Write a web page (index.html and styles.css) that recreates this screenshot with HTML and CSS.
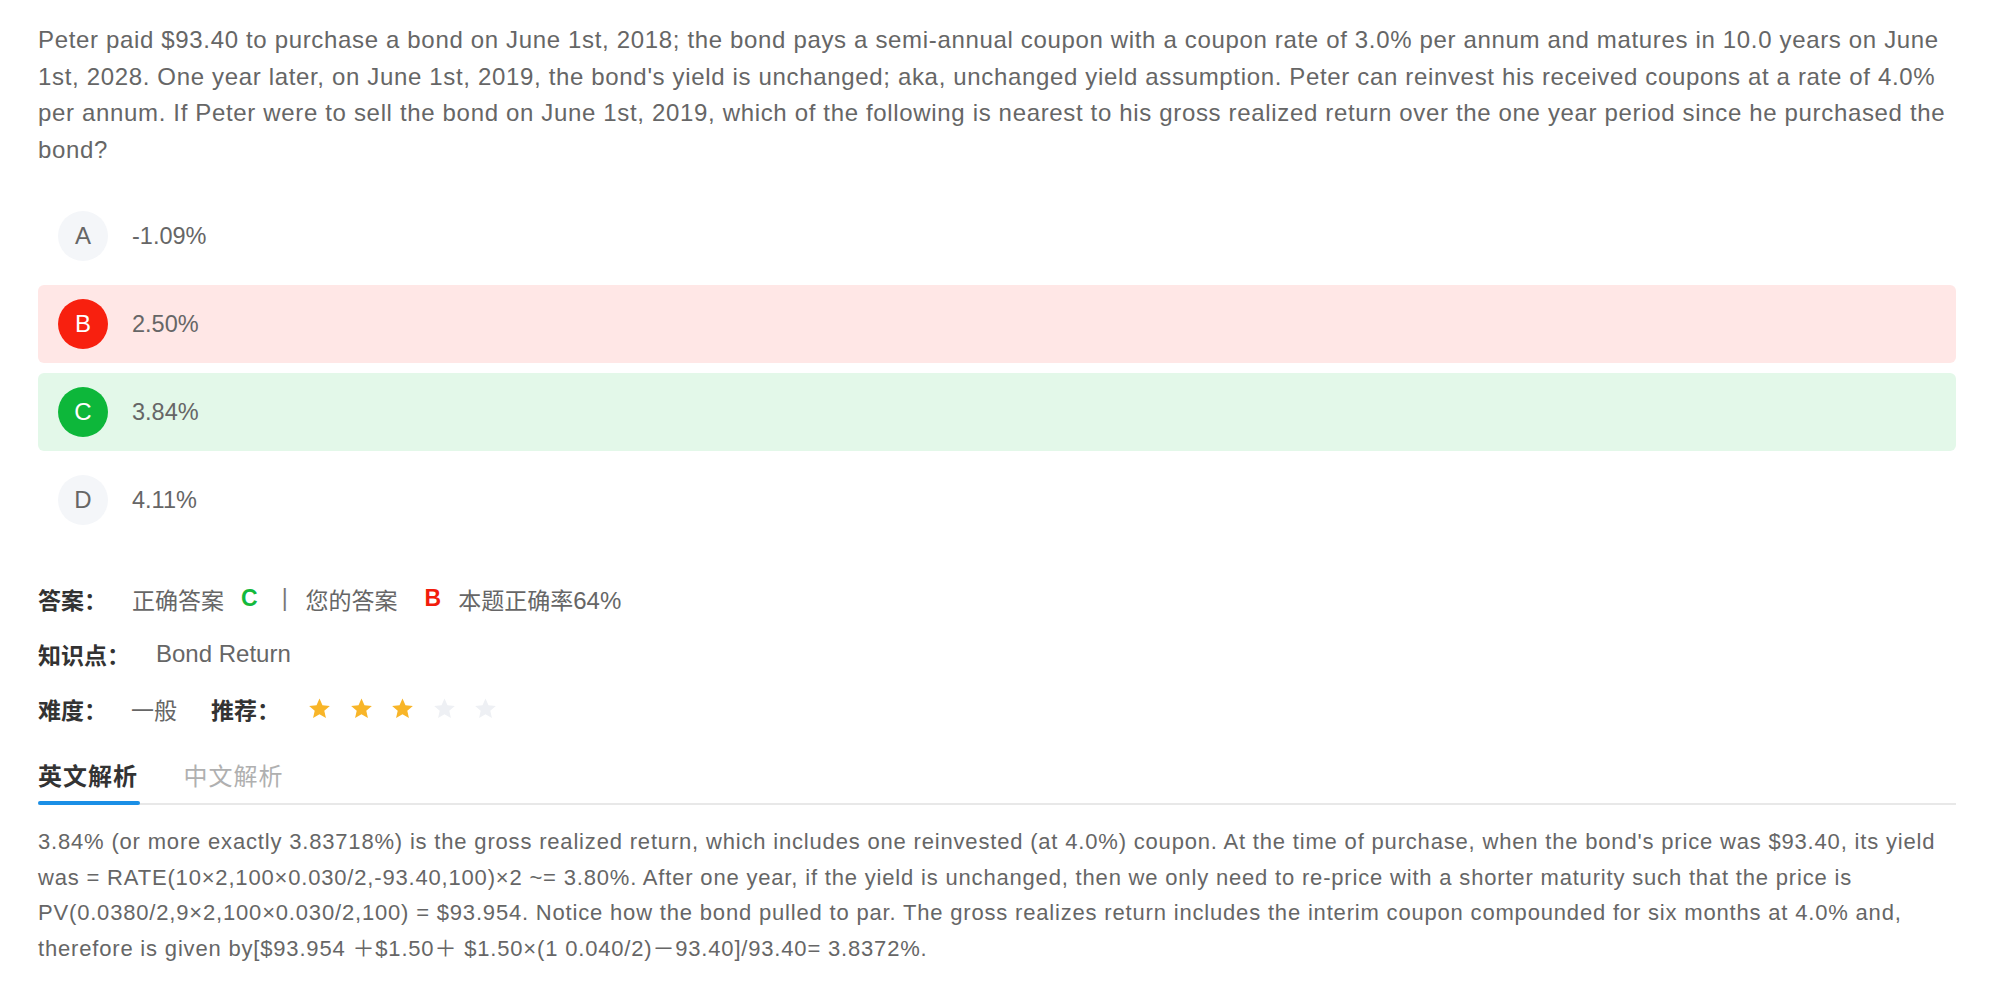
FILE: index.html
```html
<!DOCTYPE html>
<html lang="zh">
<head>
<meta charset="utf-8">
<title>Question</title>
<link rel="stylesheet" href="styles.css">
</head>
<body>
<div class="page">
  <div class="question">Peter paid $93.40 to purchase a bond on June 1st, 2018; the bond pays a semi-annual coupon with a coupon rate of 3.0% per annum and matures in 10.0 years on June 1st, 2028. One year later, on June 1st, 2019, the bond's yield is unchanged; aka, unchanged yield assumption. Peter can reinvest his received coupons at a rate of 4.0% per annum. If Peter were to sell the bond on June 1st, 2019, which of the following is nearest to his gross realized return over the one year period since he purchased the bond?</div>

  <div class="options">
    <div class="option"><span class="letter">A</span><span class="opt-text">-1.09%</span></div>
    <div class="option wrong"><span class="letter">B</span><span class="opt-text">2.50%</span></div>
    <div class="option right"><span class="letter">C</span><span class="opt-text">3.84%</span></div>
    <div class="option"><span class="letter">D</span><span class="opt-text">4.11%</span></div>
  </div>

  <div class="meta">
    <div class="meta-row">
      <span class="label">答案：</span>
      <span class="val cjk ans-val">正确答案</span><span class="key key-right">C</span>
      <span class="sep">|</span>
      <span class="val cjk">您的答案</span><span class="key key-wrong">B</span>
      <span class="val cjk">本题正确率<span class="num">64%</span></span>
    </div>
    <div class="meta-row">
      <span class="label">知识点：</span>
      <span class="val topic">Bond Return</span>
    </div>
    <div class="meta-row">
      <span class="label">难度：</span>
      <span class="val cjk diff">一般</span>
      <span class="label rec">推荐：</span>
      <span class="stars">
        <svg class="star on" viewBox="0 0 24 24"><path d="M12 1.5l3.1 7.1 7.7.7-5.8 5.1 1.7 7.6L12 18l-6.7 4 1.7-7.6-5.8-5.1 7.7-.7z"/></svg>
        <svg class="star on" viewBox="0 0 24 24"><path d="M12 1.5l3.1 7.1 7.7.7-5.8 5.1 1.7 7.6L12 18l-6.7 4 1.7-7.6-5.8-5.1 7.7-.7z"/></svg>
        <svg class="star on" viewBox="0 0 24 24"><path d="M12 1.5l3.1 7.1 7.7.7-5.8 5.1 1.7 7.6L12 18l-6.7 4 1.7-7.6-5.8-5.1 7.7-.7z"/></svg>
        <svg class="star" viewBox="0 0 24 24"><path d="M12 1.5l3.1 7.1 7.7.7-5.8 5.1 1.7 7.6L12 18l-6.7 4 1.7-7.6-5.8-5.1 7.7-.7z"/></svg>
        <svg class="star" viewBox="0 0 24 24"><path d="M12 1.5l3.1 7.1 7.7.7-5.8 5.1 1.7 7.6L12 18l-6.7 4 1.7-7.6-5.8-5.1 7.7-.7z"/></svg>
      </span>
    </div>
  </div>

  <div class="tabs">
    <span class="tab active">英文解析</span>
    <span class="tab">中文解析</span>
  </div>

  <div class="explain">3.84% (or more exactly 3.83718%) is the gross realized return, which includes one reinvested (at 4.0%) coupon. At the time of purchase, when the bond's price was $93.40, its yield was = RATE(10×2,100×0.030/2,-93.40,100)×2 ~= 3.80%. After one year, if the yield is unchanged, then we only need to re-price with a shorter maturity such that the price is PV(0.0380/2,9×2,100×0.030/2,100) = $93.954. Notice how the bond pulled to par. The gross realizes return includes the interim coupon compounded for six months at 4.0% and, therefore is given by[$93.954 ＋$1.50＋ $1.50×(1 0.040/2)－93.40]/93.40= 3.8372%.</div>
</div>
</body>
</html>
```

FILE: styles.css
```css
* { box-sizing: border-box; }
html, body { margin: 0; padding: 0; background: #fff; }
body {
  font-family: "Liberation Sans", Arial, "Noto Sans CJK SC", sans-serif;
  color: #666;
}
.page {
  width: 1956px;
  padding: 22px 0 0 38px;
}
.question {
  font-size: 24px;
  letter-spacing: 0.66px;
  line-height: 36.5px;
  color: #666;
}
.options {
  margin-top: 29px;
  display: flex;
  flex-direction: column;
  gap: 10px;
}
.option {
  height: 78px;
  display: flex;
  align-items: center;
  padding: 0 20px;
  border-radius: 6px;
}
.option.wrong { background: #ffe7e6; }
.option.right { background: #e3f8e9; }
.letter {
  width: 50px;
  height: 50px;
  border-radius: 50%;
  background: #f4f6f9;
  color: #666;
  font-size: 24px;
  display: flex;
  align-items: center;
  justify-content: center;
  flex-shrink: 0;
}
.wrong .letter { background: #f8200f; color: #fff; }
.right .letter { background: #0db73a; color: #fff; }
.opt-text {
  margin-left: 24px;
  font-size: 23.5px;
  color: #666;
}
.meta {
  margin-top: 32px;
}
.meta-row {
  height: 55px;
  display: flex;
  align-items: center;
  font-size: 23px;
}
.label {
  font-family: "Noto Sans CJK SC", sans-serif;
  font-weight: 700;
  color: #333;
}
.val {
  font-family: "Liberation Sans", "Noto Sans CJK SC", sans-serif;
  color: #666;
}
.num { font-size: 24px; }
.ans-val { margin-left: 25px; }
.key {
  font-weight: 700;
  font-size: 23px;
  margin: 0 24px 0 17px;
}
.key-right { color: #13b93c; }
.key-wrong { color: #f21c0c; margin-left: 27px; margin-right: 17px; }
.sep { color: #777; margin-right: 18px; }
.topic { margin-left: 26px; font-size: 24px; }
.diff { margin-left: 24px; }
.rec { margin-left: 34px; }
.stars {
  display: flex;
  gap: 18.5px;
  margin-left: 28px;
}
.star { width: 23px; height: 23px; fill: #eef0f4; }
.star.on { fill: #f8b528; }
.tabs {
  margin-top: 19px;
  display: flex;
  gap: 45.5px;
  border-bottom: 2px solid #e8e8e8;
  padding-bottom: 8px;
}
.tab {
  font-family: "Noto Sans CJK SC", sans-serif;
  font-size: 24px;
  letter-spacing: 1px;
  line-height: 40px;
  color: #b0b0b0;
  position: relative;
}
.tab.active {
  color: #333;
  font-weight: 700;
}
.tab.active::after {
  content: "";
  position: absolute;
  left: 0;
  right: -2px;
  bottom: -10px;
  height: 4px;
  background: #1a8fe6;
  border-radius: 2px;
}
.explain {
  margin-top: 19px;
  font-size: 22px;
  letter-spacing: 0.82px;
  line-height: 35.7px;
  color: #666;
}
```
